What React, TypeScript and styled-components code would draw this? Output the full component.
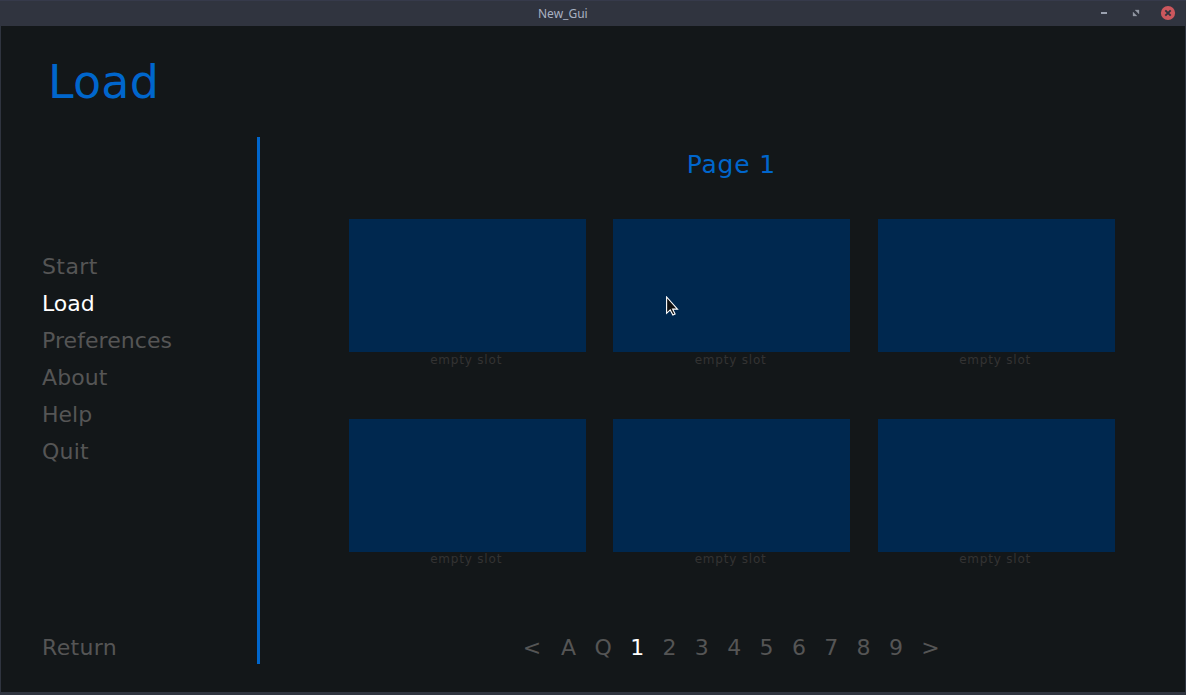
import React from "react";
import styled, { createGlobalStyle } from "styled-components";

const GlobalStyle = createGlobalStyle`
  * { box-sizing: border-box; }
  body { margin: 0; background: #131719; overflow: hidden; }
`;

const Window = styled.div`
  width: 1186px;
  height: 695px;
  display: flex;
  flex-direction: column;
  background: #2f343f;
  font-family: "DejaVu Sans", sans-serif;
`;

const TitleBar = styled.header`
  height: 26px;
  flex: none;
  display: grid;
  grid-template-columns: 1fr auto;
  align-items: center;
  border-top: 1px solid #363a4b;
  background: #30343f;
`;

const WindowName = styled.div`
  padding-left: 538px;
  font: 12px/24px "Noto Sans", sans-serif;
  color: #a9b1c2;
`;

const WindowControls = styled.div`
  display: flex;
  padding: 0 10px 1px 0;
  gap: 16px;
  svg { display: block; }
`;

const Screen = styled.main`
  height: 666px;
  margin: 0 1px 3px;
  display: flex;
  flex-direction: column;
  background: #131719;
`;

const ScreenTitle = styled.h1`
  margin: 0;
  height: 111px;
  padding: 29px 0 0 47px;
  font-size: 46px;
  line-height: 54px;
  letter-spacing: 0.2px;
  font-weight: 400;
  color: #0066cc;
`;

const Body = styled.div`
  display: flex;
  height: 527px;
`;

const Sidebar = styled.nav`
  width: 259px;
  flex: none;
  display: flex;
  flex-direction: column;
  padding: 111px 0 0 41px;
  border-right: 3px solid #0066cc;
`;

const MenuItem = styled.a<{ $active?: boolean; $tracking?: number }>`
  height: 37px;
  font-size: 22px;
  line-height: 37px;
  letter-spacing: ${(p) => p.$tracking ?? 0}px;
  color: ${(p) => (p.$active ? "#fff" : "#555")};
`;

const ReturnItem = styled(MenuItem)`
  margin: auto 0 -2px;
`;

const Content = styled.section`
  flex: 1;
  display: flex;
  flex-direction: column;
  align-items: center;
  padding-left: 18.5px;
`;

const PageLabel = styled.h2`
  margin: 12px 0 0;
  height: 70.4px;
  padding-right: 1px;
  font-size: 25px;
  line-height: 31px;
  letter-spacing: 0.8px;
  font-weight: 400;
  color: #0066cc;
`;

const Slots = styled.div`
  display: grid;
  grid-template-columns: repeat(3, 236.7px);
  grid-auto-rows: 199.5px;
  column-gap: 27.8px;
`;

const Slot = styled.div`
  text-align: center;
`;

const Thumbnail = styled.div`
  position: relative;
  height: 132.8px;
  background: #00284f;
`;

const SlotName = styled.div`
  margin-top: 0.35px;
  font-size: 12px;
  line-height: 15px;
  letter-spacing: 0.8px;
  padding-right: 2.2px;
  color: #333;
`;

const Cursor = styled.svg`
  position: absolute;
  left: 53px;
  top: 77px;
`;

const Pagination = styled.div`
  display: flex;
  margin: auto 0 -2px;
  padding-right: 1px;
  gap: 18.35px;
  ${MenuItem}:first-child { margin-right: 1.5px; }
`;

const menu = [
  { label: "Start", tracking: 0.4 },
  { label: "Load" },
  { label: "Preferences", tracking: 0.06 },
  { label: "About", tracking: 0.1 },
  { label: "Help" },
  { label: "Quit", tracking: 0.25 },
];
const pages = ["<", "A", "Q", "1", "2", "3", "4", "5", "6", "7", "8", "9", ">"];

export default function App() {
  return (
    <Window>
      <GlobalStyle />
      <TitleBar>
        <WindowName>New_Gui</WindowName>
        <WindowControls>
          <svg width="16" height="16" viewBox="0 0 16 16">
            <path d="M5 7h6v2H5z" fill="#9ba1af" />
          </svg>
          <svg width="16" height="16" viewBox="0 0 16 16">
            <path d="M7 5H11v4zM5 7L9 11H5z" fill="#9297a3" stroke="#9297a3" strokeWidth=".3" />
          </svg>
          <svg width="16" height="16" viewBox="0 0 16 16">
            <circle cx="8" cy="8" r="7.1" fill="#cc575d" />
            <path d="M5.3 5.3l5.4 5.4M10.7 5.3l-5.4 5.4" stroke="#2f343f" strokeWidth="1.9" />
          </svg>
        </WindowControls>
      </TitleBar>
      <Screen>
        <ScreenTitle>Load</ScreenTitle>
        <Body>
          <Sidebar>
            {menu.map((m) => (
              <MenuItem key={m.label} $active={m.label === "Load"} $tracking={m.tracking}>
                {m.label}
              </MenuItem>
            ))}
            <ReturnItem $tracking={0.35}>Return</ReturnItem>
          </Sidebar>
          <Content>
            <PageLabel>Page 1</PageLabel>
            <Slots>
              {[0, 1, 2, 3, 4, 5].map((i) => (
                <Slot key={i}>
                  <Thumbnail>
                    {i === 1 && (
                      <Cursor width="14" height="22" viewBox="0 0 14 22">
                        <path
                          d="M.6 1v16.3l3.6-3.4 2.7 5.2 2.2-1.1-2.5-4.9h4.9z"
                          fill="#111"
                          stroke="#fff"
                          strokeWidth="1.1"
                        />
                      </Cursor>
                    )}
                  </Thumbnail>
                  <SlotName>empty slot</SlotName>
                </Slot>
              ))}
            </Slots>
            <Pagination>
              {pages.map((p) => (
                <MenuItem key={p} $active={p === "1"}>{p}</MenuItem>
              ))}
            </Pagination>
          </Content>
        </Body>
      </Screen>
    </Window>
  );
}
